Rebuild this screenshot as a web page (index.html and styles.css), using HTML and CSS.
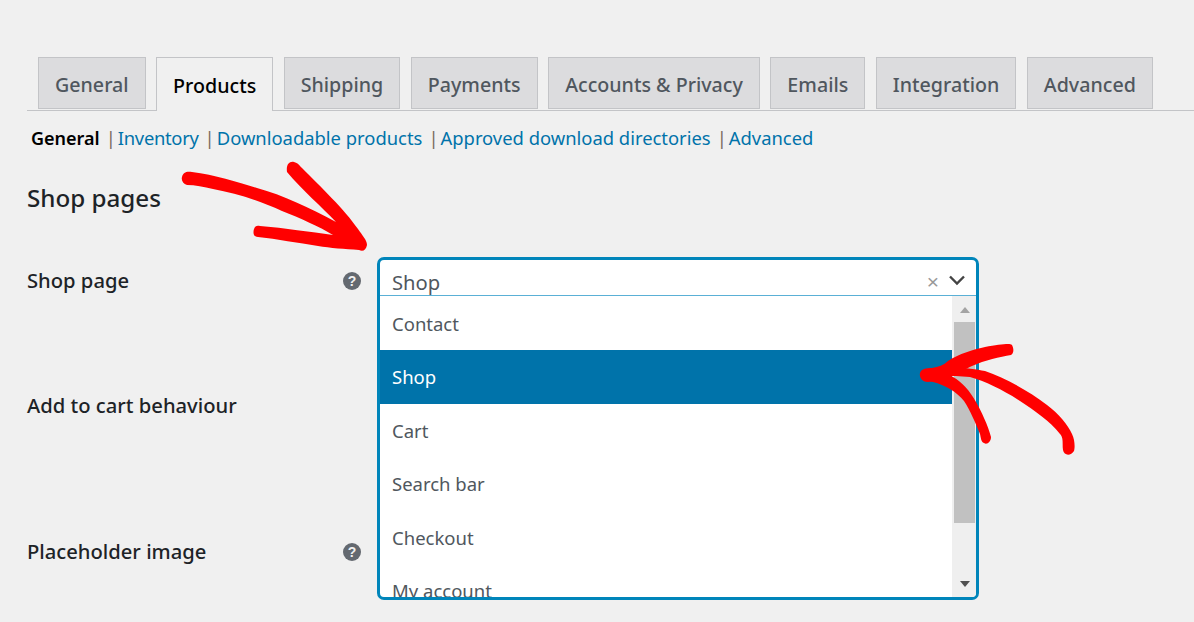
FILE: index.html
```html
<!DOCTYPE html>
<html lang="en">
<head>
<meta charset="utf-8">
<title>Products settings</title>
<link rel="stylesheet" href="styles.css">
</head>
<body>
<main class="page">
  <nav class="tabs">
    <a class="tab">General</a>
    <a class="tab tab-active">Products</a>
    <a class="tab">Shipping</a>
    <a class="tab">Payments</a>
    <a class="tab">Accounts &amp; Privacy</a>
    <a class="tab">Emails</a>
    <a class="tab">Integration</a>
    <a class="tab">Advanced</a>
  </nav>
  <ul class="subnav">
    <li class="sub sub-current">General</li>
    <li class="sep">|</li>
    <li class="sub sub-tight">Inventory</li>
    <li class="sep">|</li>
    <li class="sub">Downloadable products</li>
    <li class="sep">|</li>
    <li class="sub">Approved download directories</li>
    <li class="sep">|</li>
    <li class="sub">Advanced</li>
  </ul>
  <section class="form">
    <h2 class="heading">Shop pages</h2>
    <div class="row row-shop">
      <span class="label">Shop page</span>
      <span class="help">?</span>
    </div>
    <div class="row row-cart">
      <span class="label">Add to cart behaviour</span>
    </div>
    <div class="row row-image">
      <span class="label">Placeholder image</span>
      <span class="help">?</span>
    </div>

    <div class="select">
      <div class="select-head">
        <span class="select-value">Shop</span>
        <span class="clear">×</span>
        <svg class="chevron" width="18" height="12" viewBox="0 0 18 12"><path d="M2 2.5 9 9.5 16 2.5" fill="none" stroke="#444" stroke-width="2.4"/></svg>
      </div>
      <div class="select-body">
        <ul class="options">
          <li class="option">Contact</li>
          <li class="option option-active">Shop</li>
          <li class="option">Cart</li>
          <li class="option">Search bar</li>
          <li class="option">Checkout</li>
          <li class="option">My account</li>
        </ul>
        <div class="scrollbar">
          <span class="arrow-up"></span>
          <span class="thumb"></span>
          <span class="arrow-down"></span>
        </div>
      </div>
    </div>
  </section>
</main>
<svg class="annotations" width="1194" height="622" viewBox="0 0 1194 622" fill="#ff0000">
  <path d="M182 177C183 172 187 171 192 172C215 175 238 182 257 188C283 195 310 208 336 222C322 207 302 190 287 172C286 165 289 161 294 162C298 163 299 165 302 168C320 186 345 210 358 229C362 235 367 240 367 245C366 250 363 252 359 250C345 249 330 248 318 246C298 243 277 239 258 237C253 237 253 232 254 229C255 226 257 225 260 226C285 228 310 232 333 235C320 227 300 218 282 211C258 200 235 193 213 189C204 187 195 185 187 185C183 184 181 180 182 177Z"/>
  <path d="M1012 345C1014 349 1014 353 1011 355C1000 357 985 360 972 366C966 369 960 372 950 374C945 376 935 381 928 382C922 382 919 377 920 373C921 369 926 368 932 368C938 367 944 365 948 361C958 354 975 349 985 347C995 345 1003 344 1008 344C1010 344 1011 344 1012 345Z"/>
  <path d="M925 370C935 369 945 373 953 377C962 382 970 391 976 402C981 411 988 425 991 437C991 442 987 445 984 443C981 442 981 438 980 434C976 424 970 410 964 401C957 392 945 385 933 382C925 381 921 375 925 370Z"/>
  <path d="M945 368C960 367 975 369 985 371C1005 378 1029 391 1047 405C1059 414 1068 425 1072 434C1075 440 1075 448 1074 451C1071 456 1064 456 1063 450C1062 445 1064 438 1060 434C1050 421 1035 411 1020 401C1005 391 985 381 970 377C960 376 950 376 945 376Z"/>
</svg>
</body>
</html>
```

FILE: styles.css
```css
* { box-sizing: border-box; }
html, body { margin: 0; padding: 0; }
body {
  width: 1194px;
  height: 622px;
  overflow: hidden;
  position: relative;
  background: #f0f0f0;
  color: #1d2327;
  font-family: "Noto Sans", "Open Sans", sans-serif;
  font-size: 20.2px;
}
.page { padding: 57px 0 0 27px; }
.tabs {
  display: flex;
  gap: 10.5px;
  height: 54px;
  padding-left: 11px;
  border-bottom: 1px solid #c3c4c7;
}
.tab {
  height: 52px;
  padding: 4px 16px 0;
  display: flex;
  align-items: center;
  background: #dcdcde;
  border: 1px solid #c3c4c7;
  color: #50575e;
  font-weight: 500;
  font-size: 19.65px;
  line-height: 1;
}
.tab-active {
  height: 54px;
  padding-bottom: 2px;
  background: #f0f0f0;
  border-bottom: 0;
  color: #000;
}
.subnav {
  list-style: none;
  display: flex;
  margin: 0;
  padding: 14px 0 0 4px;
  height: 52px;
  font-size: 18.4px;
  line-height: 26px;
}
.sub { color: #0073aa; }
.sub-current { color: #000; font-weight: 600; font-size: 18px; }
.sub-tight { letter-spacing: -0.3px; }
.sep { color: #7a6a60; margin: 0 2px 0 6px; }
.form { position: relative; }
.heading {
  margin: 0;
  height: 103px;
  padding-top: 19px;
  font-size: 24.2px;
  line-height: 32px;
  font-weight: 500;
  color: #1d2327;
}
.row {
  display: flex;
  align-items: center;
  width: 334px;
  height: 28px;
  justify-content: space-between;
}
.row-cart { margin-top: 97px; }
.row-image { margin-top: 118px; }
.label { font-weight: 500; line-height: 28px; }
.help {
  width: 18px;
  height: 18px;
  margin-top: 2px;
  border-radius: 50%;
  background: #646970;
  color: #f0f0f0;
  font: 700 14px/18px "Liberation Sans", sans-serif;
  text-align: center;
}
.select {
  position: absolute;
  left: 350px;
  top: 94px;
  width: 602px;
  height: 343px;
  background: #fff;
  border: 3px solid #0085ba;
  border-radius: 7px;
  overflow: hidden;
}
.select-head {
  display: flex;
  align-items: center;
  height: 36px;
  padding: 8px 10px 0 12px;
  border-bottom: 1px solid #5ab0d6;
  color: #50575e;
}
.select-value { flex: 1; line-height: 26px; }
.clear { color: #999; font-size: 21px; line-height: 1; margin-right: 9px; font-family: "Liberation Sans", sans-serif; }
.chevron { display: block; margin-bottom: 4px; }
.select-body { display: flex; height: 301px; overflow: hidden; }
.options { list-style: none; margin: 0; padding: 1px 0 0; flex: 1; min-width: 0; }
.option {
  height: 53.4px;
  padding: 0 12px;
  font-size: 18.5px;
  line-height: 53.4px;
  color: #50575e;
}
.option-active { background: #0073aa; color: #fff; }
.scrollbar {
  width: 24px;
  padding-right: 1px;
  background: #efefef;
  display: flex;
  flex-direction: column;
  align-items: flex-end;
  position: relative;
}
.arrow-up {
  margin: 11px 5px 0 0;
  width: 0;
  height: 0;
  border: 5.5px solid transparent;
  border-top: 0;
  border-bottom: 6px solid #a3a3a3;
}
.thumb {
  width: 21px;
  margin-top: 9px;
  height: 201px;
  background: #c1c1c1;
}
.arrow-down {
  margin: 58px 5px 0 0;
  width: 0;
  height: 0;
  border: 5.5px solid transparent;
  border-bottom: 0;
  border-top: 6px solid #505050;
}
.annotations { position: absolute; left: 0; top: 0; pointer-events: none; }
```
